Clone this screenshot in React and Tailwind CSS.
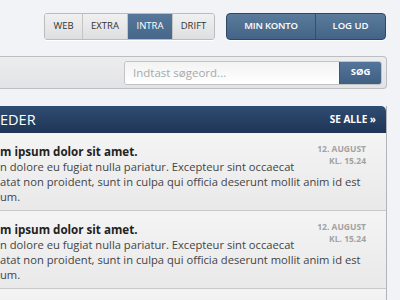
import React from 'react';

const navItems = [
  { label: 'WEB', w: 'w-[37px]' },
  { label: 'EXTRA', w: 'w-[45px]' },
  { label: 'INTRA', w: 'w-[45px]', active: true },
  { label: 'DRIFT', w: 'w-[42px]' },
];

const news = [
  {
    title: 'm ipsum dolor sit amet.',
    lines: [
      'n dolore eu fugiat nulla pariatur. Excepteur sint occaecat',
      'atat non proident, sunt in culpa qui officia deserunt mollit anim id est',
      'um.',
    ],
    date: '12. AUGUST',
    time: 'KL. 15.24',
  },
  {
    title: 'm ipsum dolor sit amet.',
    lines: [
      'n dolore eu fugiat nulla pariatur. Excepteur sint occaecat',
      'atat non proident, sunt in culpa qui officia deserunt mollit anim id est',
      'um.',
    ],
    date: '12. AUGUST',
    time: 'KL. 15.24',
  },
];

const App = () => {
  return (
    <div
      className="w-[400px] h-[300px] overflow-hidden bg-[#f2f3f7]"
      style={{ fontFamily: '"Open Sans", "DejaVu Sans", sans-serif' }}
    >
      <div className="w-[387px]">
        {/* Top navigation */}
        <div className="flex justify-end gap-[11px] pt-[13px] pr-[1px]">
          <div className="flex h-[27px] rounded-[3px] border border-[#bcbcbc] overflow-hidden shadow-[0_1px_0_#fff]">
            {navItems.map((item, i) => (
              <div
                key={item.label}
                className={`${item.w} flex items-center justify-center text-[9.5px] ${
                  i > 0 ? 'border-l border-[#c4c4c4]' : ''
                } ${
                  item.active
                    ? 'bg-gradient-to-b from-[#56779a] to-[#46678a] text-white border-[#3e5c7c]'
                    : 'bg-gradient-to-b from-[#f0f0f0] to-[#dedfe1] text-[#333]'
                }`}
              >
                {item.label}
              </div>
            ))}
          </div>
          <div className="flex h-[27px] rounded-[4px] border border-[#2e4866] overflow-hidden bg-gradient-to-b from-[#5b7b9c] to-[#436486] shadow-[0_1px_0_#fff]">
            <div className="w-[88px] flex items-center justify-center text-[9.5px] font-semibold text-white tracking-[-0.2px]">
              MIN KONTO
            </div>
            <div className="w-[70px] flex items-center justify-center text-[9.5px] font-semibold text-white border-l border-[#34506f]">
              LOG UD
            </div>
          </div>
        </div>

        {/* Search bar */}
        <div className="mt-[16px] h-[33px] flex items-center justify-end pr-[4px] border-y border-r border-[#bdbec2] rounded-r-[4px] bg-gradient-to-b from-[#ededef] to-[#e2e3e6]">
          <div className="flex h-[24px] rounded-[3px] border border-[#c3c3c3] overflow-hidden">
            <div className="w-[214px] flex items-center pl-[8px] bg-gradient-to-b from-[#f3f3f3] to-[#ffffff] text-[11.5px] text-[#a9a9a9]">
              Indtast søgeord...
            </div>
            <div className="w-[42px] flex items-center justify-center bg-gradient-to-b from-[#54759a] to-[#3f5f82] text-white text-[9.5px] font-bold border-l border-[#3a5878]">
              SØG
            </div>
          </div>
        </div>

        {/* News panel */}
        <div className="mt-[17px] border-r border-[#b3b4b8]">
          <div className="h-[27px] flex items-center justify-between rounded-tr-[5px] bg-gradient-to-b from-[#2f4d72] to-[#1e3556] pr-[10px]">
            <span className="text-[14.5px] text-white">EDER</span>
            <span className="text-[10px] font-bold text-white">SE ALLE »</span>
          </div>
          {news.map((n, i) => (
            <div
              key={i}
              className="h-[78px] relative bg-gradient-to-b from-[#f4f4f4] to-[#e9e9e9] border-b border-[#c9c9c9] pt-[11px]"
            >
              <div className="absolute right-[20px] top-[10px] text-right text-[8.5px] font-bold leading-[12px] text-[#a2a2a2]">
                <div>{n.date}</div>
                <div>{n.time}</div>
              </div>
              <div className="text-[11.6px] font-bold leading-[15px] text-[#222] whitespace-nowrap">{n.title}</div>
              {n.lines.map((l, j) => (
                <div key={j} className="text-[11.2px] leading-[15px] text-[#444] whitespace-nowrap">
                  {l}
                </div>
              ))}
            </div>
          ))}
          <div className="h-[40px] bg-gradient-to-b from-[#f4f4f4] to-[#e9e9e9]"></div>
        </div>
      </div>
    </div>
  );
};

export default App;
